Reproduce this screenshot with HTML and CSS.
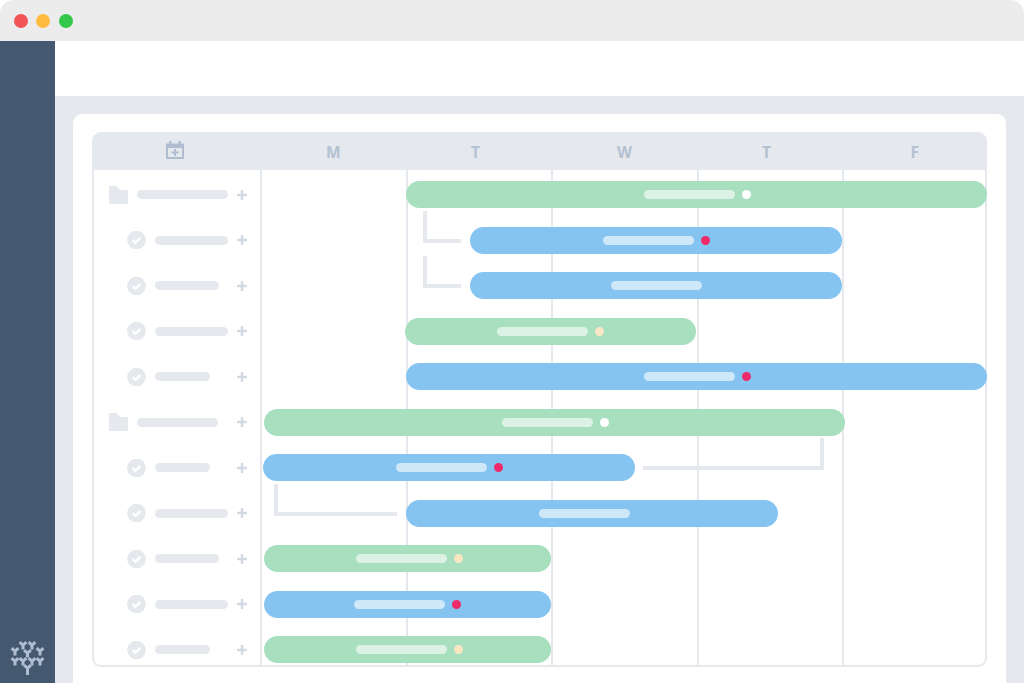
FILE: index.html
```html
<!DOCTYPE html>
<html lang="en">
<head>
<meta charset="utf-8">
<title>Gantt chart</title>
<link rel="stylesheet" href="styles.css">
</head>
<body>
<svg class="sprite" aria-hidden="true">
  <symbol id="plus" viewBox="0 0 10 10"><path d="M3.800 0h2.400v3.800H10v2.400H6.200V10H3.800V6.200H0V3.800h3.800z"/></symbol>
  <symbol id="folder" viewBox="0 0 19 18"><path d="M0 1a1 1 0 0 1 1-1h6.500L11 4h7a1 1 0 0 1 1 1v12a1 1 0 0 1-1 1H1a1 1 0 0 1-1-1z"/></symbol>
  <symbol id="check" viewBox="0 0 19 18"><circle cx="9.500" cy="9" r="9.300" fill="#e5e8ed"/><path d="M5.700 9.200l2.700 2.600 5-5" fill="none" stroke="#fff" stroke-width="2.400"/></symbol>
  <symbol id="person" viewBox="0 0 10 11"><path d="M1.600 2.200L5 5.200l3.400-3M5 5.200V9.500" fill="none" stroke="#aebdd0" stroke-width="3"/></symbol>
</svg>
<div class="window">
  <header class="titlebar">
    <span class="light light-red"></span>
    <span class="light light-yellow"></span>
    <span class="light light-green"></span>
  </header>
  <div class="app">
    <aside class="sidebar">
      <svg class="logo" viewBox="0 0 37 35" aria-hidden="true">
        <use href="#person" x="9" y="0" width="10" height="11"/>
        <use href="#person" x="18" y="0" width="10" height="11"/>
        <use href="#person" x="1" y="6" width="10" height="11"/>
        <use href="#person" x="13.500" y="8" width="10" height="11"/>
        <use href="#person" x="26" y="6" width="10" height="11"/>
        <use href="#person" x="1" y="16" width="10" height="11"/>
        <use href="#person" x="9" y="16" width="10" height="11"/>
        <use href="#person" x="18" y="16" width="10" height="11"/>
        <use href="#person" x="26" y="16" width="10" height="11"/>
        <use href="#person" x="13.500" y="23" width="10" height="11"/>
        <rect x="17" y="30" width="3" height="5" fill="#aebdd0"/>
      </svg>
    </aside>
    <main class="main">
      <div class="topbar"></div>
      <div class="content">
        <section class="card">
          <div class="gantt">
            <div class="gantt-head">
              <div class="head-icon">
                <svg class="calendar" viewBox="0 0 18 18" aria-hidden="true">
                  <path d="M3 0h2.500v2.500h7V0H15v2.500h3V18H0V2.500h3zM2 7v9h14V7z" fill="#b0bdd1" fill-rule="evenodd"/>
                  <path d="M8 8h2v2.500h2.500v2H10V15H8v-2.500H5.500v-2H8z" fill="#b0bdd1"/>
                </svg>
              </div>
              <div class="day">M</div>
              <div class="day">T</div>
              <div class="day">W</div>
              <div class="day">T</div>
              <div class="day day-last">F</div>
            </div>
            <div class="gantt-body">
              <div class="tasks">
                <div class="task"><svg class="task-icon"><use href="#folder"/></svg><span class="label" style="width:90.500px"></span><svg class="plus"><use href="#plus"/></svg></div>
                <div class="task sub"><svg class="task-icon"><use href="#check"/></svg><span class="label" style="width:72.500px"></span><svg class="plus"><use href="#plus"/></svg></div>
                <div class="task sub"><svg class="task-icon"><use href="#check"/></svg><span class="label" style="width:63.500px"></span><svg class="plus"><use href="#plus"/></svg></div>
                <div class="task sub"><svg class="task-icon"><use href="#check"/></svg><span class="label" style="width:72.500px"></span><svg class="plus"><use href="#plus"/></svg></div>
                <div class="task sub"><svg class="task-icon"><use href="#check"/></svg><span class="label" style="width:54.500px"></span><svg class="plus"><use href="#plus"/></svg></div>
                <div class="task"><svg class="task-icon"><use href="#folder"/></svg><span class="label" style="width:81px"></span><svg class="plus"><use href="#plus"/></svg></div>
                <div class="task sub"><svg class="task-icon"><use href="#check"/></svg><span class="label" style="width:54.500px"></span><svg class="plus"><use href="#plus"/></svg></div>
                <div class="task sub"><svg class="task-icon"><use href="#check"/></svg><span class="label" style="width:72.500px"></span><svg class="plus"><use href="#plus"/></svg></div>
                <div class="task sub"><svg class="task-icon"><use href="#check"/></svg><span class="label" style="width:63.500px"></span><svg class="plus"><use href="#plus"/></svg></div>
                <div class="task sub"><svg class="task-icon"><use href="#check"/></svg><span class="label" style="width:72.500px"></span><svg class="plus"><use href="#plus"/></svg></div>
                <div class="task sub"><svg class="task-icon"><use href="#check"/></svg><span class="label" style="width:54.500px"></span><svg class="plus"><use href="#plus"/></svg></div>
              </div>
              <div class="chart">
                <div class="gridlines"><i></i><i></i><i></i><i></i><i></i></div>
                <div class="bars">
                  <div class="bar green" style="margin-left:144px;width:581px;padding-left:238px"><span class="pill"></span><span class="dot dot-white"></span></div>
                  <div class="bar blue" style="margin-left:208px;width:372px;padding-left:133px"><span class="pill"></span><span class="dot dot-red"></span></div>
                  <div class="bar blue" style="margin-left:208px;width:372px;padding-left:141px"><span class="pill"></span></div>
                  <div class="bar green" style="margin-left:143px;width:291px;padding-left:92px"><span class="pill"></span><span class="dot dot-cream"></span></div>
                  <div class="bar blue" style="margin-left:144px;width:581px;padding-left:238px"><span class="pill"></span><span class="dot dot-red"></span></div>
                  <div class="bar green" style="margin-left:2px;width:581px;padding-left:238px"><span class="pill"></span><span class="dot dot-white"></span></div>
                  <div class="bar blue" style="margin-left:1px;width:372px;padding-left:133px"><span class="pill"></span><span class="dot dot-red"></span></div>
                  <div class="bar blue" style="margin-left:144px;width:372px;padding-left:133px"><span class="pill"></span></div>
                  <div class="bar green" style="margin-left:2px;width:287px;padding-left:92px"><span class="pill"></span><span class="dot dot-cream"></span></div>
                  <div class="bar blue" style="margin-left:2px;width:287px;padding-left:90px"><span class="pill"></span><span class="dot dot-red"></span></div>
                  <div class="bar green" style="margin-left:2px;width:287px;padding-left:92px"><span class="pill"></span><span class="dot dot-cream"></span></div>
                </div>
                <span class="link link-a"></span>
                <span class="link link-b"></span>
                <span class="link link-c"></span>
                <span class="link link-d"></span>
              </div>
            </div>
          </div>
        </section>
      </div>
    </main>
  </div>
</div>
</body>
</html>
```
FILE: styles.css
```css
* { box-sizing: border-box; }
html, body { margin: 0; height: 683px; overflow: hidden; background: #fff; }
body { font-family: "Open Sans", "Liberation Sans", Arial, sans-serif; }
.sprite { display: none; }

.window { display: flex; flex-direction: column; height: 683px; }
.titlebar {
  flex: none; height: 41px; background: #ececec; border-radius: 14px 14px 0 0;
  display: flex; align-items: center; gap: 8.5px; padding-left: 13.500px;
}
.light { width: 14px; height: 14px; border-radius: 50%; }
.light-red { background: #f15555; }
.light-yellow { background: #fdbc40; }
.light-green { background: #34c94a; }

.app { flex: 1; display: flex; min-height: 0; }
.sidebar {
  flex: none; width: 55px; background: #44596f;
  display: flex; flex-direction: column; justify-content: flex-end; align-items: flex-start;
  padding: 0 0 8px 9px;
}
.logo { width: 37px; height: 35px; overflow: visible; }

.main { flex: 1; display: flex; flex-direction: column; min-width: 0; }
.topbar { flex: none; height: 55px; background: #fff; }
.content { flex: 1; background: #e5e8ed; padding: 18px 18px 0; }
.card { height: 100%; background: #fff; border-radius: 9px 9px 0 0; padding: 18px 19px 0; }

.gantt { display: flex; flex-direction: column; }
.gantt-head {
  height: 38px; background: #e5e8ed; border-radius: 9px 9px 0 0;
  display: grid; grid-template-columns: 170px 145px 146px 145px 1fr 1fr;
  align-items: center;
}
.head-icon { padding: 0 0 2px 74px; }
.calendar { width: 18px; height: 18px; display: block; }
.day { font-size: 15.500px; line-height: 1; font-weight: 700; color: #b4c1d3; padding-left: 64px; padding-top: 3px; }
.day-last { padding-left: 68px; }

.gantt-body {
  display: grid; grid-template-columns: 168px 1fr;
  border: 2px solid #e5e8ed; border-top: 0; border-radius: 0 0 9px 9px;
  height: 496.5px;
}
.tasks {
  display: flex; flex-direction: column; gap: 18.5px; padding-top: 11px;
}
.task { height: 27px; display: flex; align-items: center; padding: 0 15px 0 15px; }
.task.sub { padding-left: 33px; }
.task-icon { width: 19px; height: 18px; fill: #e5e8ed; flex: none; margin-right: 9px; }
.label { height: 9px; border-radius: 5px; background: #e5e8ed; }
.plus { width: 10px; height: 10px; margin-left: auto; fill: #d3d9e2; flex: none; }

.chart { position: relative; }
.gridlines {
  position: absolute; inset: 0;
  display: grid; grid-template-columns: repeat(4, 145.5px) 1fr;
}
.gridlines i { border-left: 2px solid #e5e8ed; display: block; margin-left: -2px; }
.bars { position: relative; display: flex; flex-direction: column; gap: 18.5px; padding-top: 11px; margin-right: -2px; }
.bar { height: 27px; border-radius: 14px; display: flex; align-items: center; gap: 6px; }
.green { background: #a8dfbf; }
.blue { background: #85c4f1; }
.pill { width: 91px; height: 9px; border-radius: 5px; background: rgba(255, 255, 255, .6); }
.dot { width: 9px; height: 9px; margin-left: 1px; border-radius: 50%; }
.dot-white { background: #fff; }
.dot-red { background: #ee2a68; }
.dot-cream { background: #fbe6c4; }

.link { position: absolute; border-color: #e5e8ed; border-style: solid; border-width: 0; }
.link-a, .link-b, .link-d { border-left-width: 4px; border-bottom-width: 4px; }
.link-a { left: 161px; top: 41px; width: 38px; height: 32px; }
.link-b { left: 161px; top: 86px; width: 38px; height: 32px; }
.link-c { left: 381px; top: 268px; width: 181px; height: 32px; border-right-width: 4px; border-bottom-width: 4px; }
.link-d { left: 12px; top: 314px; width: 123px; height: 32px; }
```
